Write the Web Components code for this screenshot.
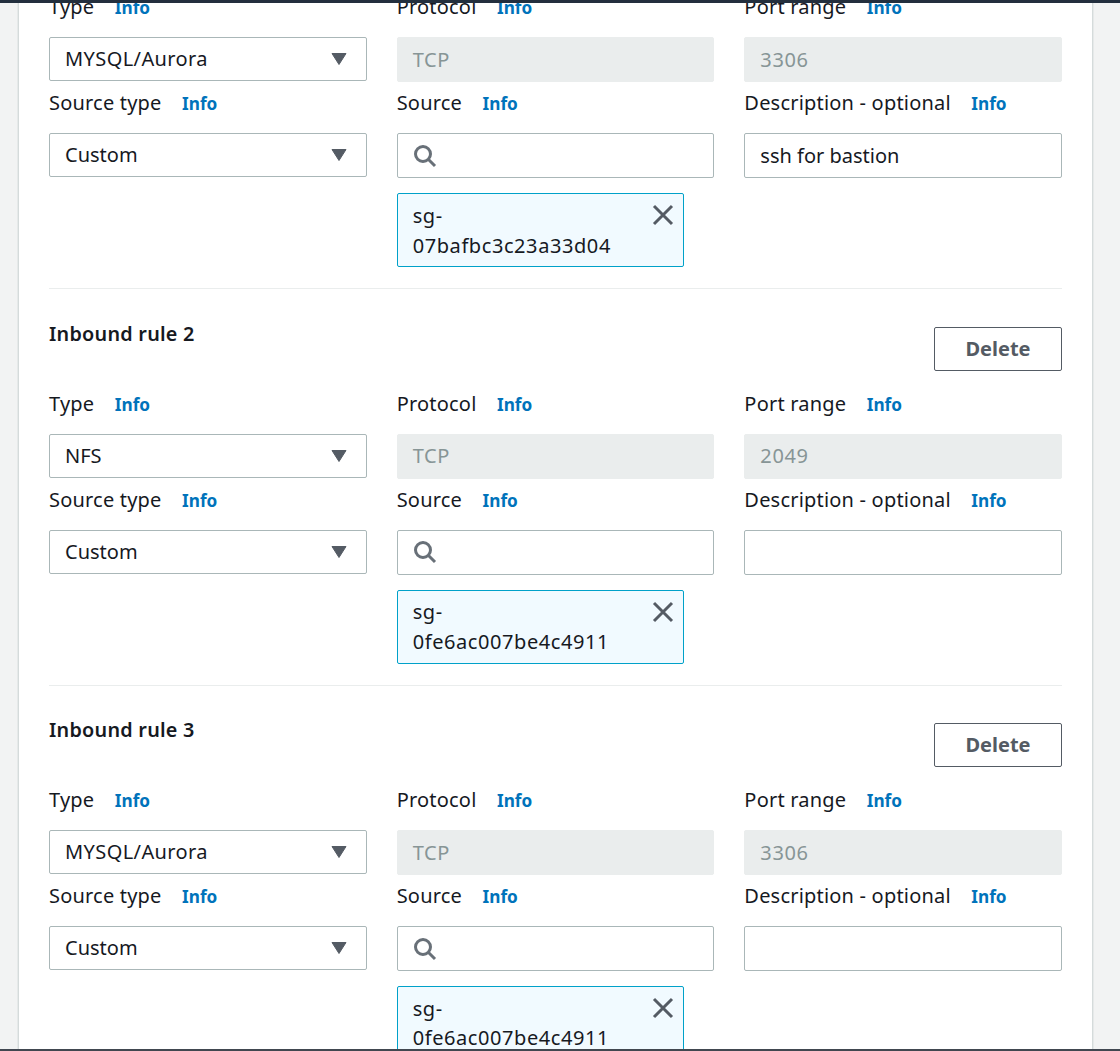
<!DOCTYPE html>
<html lang="en"><head><meta charset="utf-8"><title>Inbound rules</title>
<style>
html,body{margin:0;height:100%;overflow:hidden;background:#f2f3f3;font-family:"Noto Sans","Open Sans",sans-serif;color:#16191f}
</style></head><body>
<app-shell>
  <rule-block first type="MYSQL/Aurora" track=".4px" port="3306" desc="ssh for bastion" sg="07bafbc3c23a33d04"></rule-block>
  <rule-block n="2" type="NFS" track="0" port="2049" sg="0fe6ac007be4c4911"></rule-block>
  <rule-block n="3" type="MYSQL/Aurora" track=".4px" port="3306" sg="0fe6ac007be4c4911"></rule-block>
</app-shell>
<script>
customElements.define('app-shell',class extends HTMLElement{constructor(){super();this.attachShadow({mode:'open'}).innerHTML=`<style>
:host{display:flex;flex-direction:column;height:1051px;overflow:hidden}
.top{height:3px;background:#232f3e;flex:none}
.bottom{height:2px;background:#414750;flex:none}
main{flex:1;min-height:0;overflow:hidden;display:flex;padding:0 27px 0 18px}
.card{flex:1;background:#fff;border:solid #d5dbdb;border-width:0 1px;padding:0 30px;box-shadow:0 0 1px #aab7b8;min-width:0}
.scroll{margin-top:-9.6px}
</style><div class="top"></div><main><div class="card"><div class="scroll"><slot></slot></div></div></main><div class="bottom"></div>`}});

customElements.define('info-label',class extends HTMLElement{constructor(){super();this.attachShadow({mode:'open'}).innerHTML=`<style>
:host{display:flex;align-items:center;height:28px;margin-bottom:16px;font-size:20px;line-height:28px;letter-spacing:.2px;color:#16191f;white-space:nowrap}
a{font-size:17.2px;font-weight:700;letter-spacing:0;color:#0073bb;text-decoration:none;margin-left:20.5px;position:relative;top:1px}
</style><slot></slot><a href="#">Info</a>`}});

customElements.define('select-box',class extends HTMLElement{constructor(){super();this.attachShadow({mode:'open'}).innerHTML=`<style>
:host{display:flex;align-items:center;justify-content:space-between;box-sizing:border-box;height:44px;background:#fff;border:1px solid #aab7b8;border-radius:2px;padding:0 18px 0 15px;font-size:20px;color:#16191f}
span{padding-bottom:1.2px}
svg{width:18px;height:14px;display:block}
</style><span><slot></slot></span><svg viewBox="0 0 18 14"><path d="M2 1.5h14L9 12.5z" fill="#545b64" stroke="#545b64" stroke-linejoin="round"/></svg>`}});

customElements.define('text-box',class extends HTMLElement{constructor(){super();this.attachShadow({mode:'open'}).innerHTML=`<style>
:host{display:flex;align-items:center;gap:8px;box-sizing:border-box;height:45px;background:#fff;border:1px solid #aab7b8;border-radius:2px;padding:0 15px;font-size:20px;color:#16191f}
:host([disabled]){background:#eaeded;border-color:#eaeded;color:#879596;letter-spacing:.65px}
span{padding-bottom:1px}
</style><slot name="icon"></slot><span><slot></slot></span>`}});

customElements.define('sg-token',class extends HTMLElement{constructor(){super();this.attachShadow({mode:'open'}).innerHTML=`<style>
:host{display:block;position:relative;box-sizing:border-box;width:287px;height:74px;margin-top:15px;background:#f1faff;border:1px solid #00a1c9;border-radius:2px;padding:6.6px 70px 0 15px;font-size:20px;line-height:29.5px;letter-spacing:.58px;color:#16191f}
svg{position:absolute;right:9px;top:10px;width:22px;height:22px}
</style><slot></slot><svg viewBox="0 0 22 22"><path d="M2 2l18 18M20 2L2 20" stroke="#545b64" stroke-width="3" fill="none"/></svg>`}});

customElements.define('rule-block',class extends HTMLElement{constructor(){super();this.attachShadow({mode:'open'})}
connectedCallback(){const a=n=>this.getAttribute(n)||'';const first=this.hasAttribute('first');
this.shadowRoot.innerHTML=`<style>
:host{display:block;border-bottom:1px solid #eaeded;box-sizing:content-box}
:host(:not([first])){padding-top:37.4px}
.head{display:flex;justify-content:space-between;align-items:flex-start;height:44px;margin-bottom:19px}
h3{margin:-7.2px 0 0;font-size:19.8px;line-height:28px;font-weight:600;letter-spacing:.25px;color:#16191f}
button{box-sizing:border-box;width:128px;height:44px;border:1px solid #545b64;border-radius:2px;background:#fff;color:#545b64;font:700 20px "Noto Sans",sans-serif;padding:0 0 1px}
.grid{display:grid;grid-template-columns:repeat(3,1fr);column-gap:30px;row-gap:7px;align-items:start;padding-bottom:21px}
.m{letter-spacing:${a('track')}}
</style>
${first?'':`<div class="head"><h3>Inbound rule ${a('n')}</h3><button>Delete</button></div>`}
<div class="grid">
<div><info-label>Type</info-label><select-box class="m">${a('type')}</select-box></div>
<div><info-label>Protocol</info-label><text-box disabled>TCP</text-box></div>
<div><info-label>Port range</info-label><text-box disabled>${a('port')}</text-box></div>
<div><info-label>Source type</info-label><select-box>Custom</select-box></div>
<div><info-label>Source</info-label><text-box><svg slot="icon" width="24" height="24" viewBox="0 0 24 24" style="display:block"><circle cx="10" cy="10" r="7.5" fill="none" stroke="#687078" stroke-width="3"/><path d="M15.5 15.5L22 22" stroke="#687078" stroke-width="3" fill="none"/></svg></text-box><sg-token>sg-<br>${a('sg')}</sg-token></div>
<div><info-label>Description - optional</info-label><text-box>${a('desc')}</text-box></div>
</div>`}});
</script>
</body></html>
